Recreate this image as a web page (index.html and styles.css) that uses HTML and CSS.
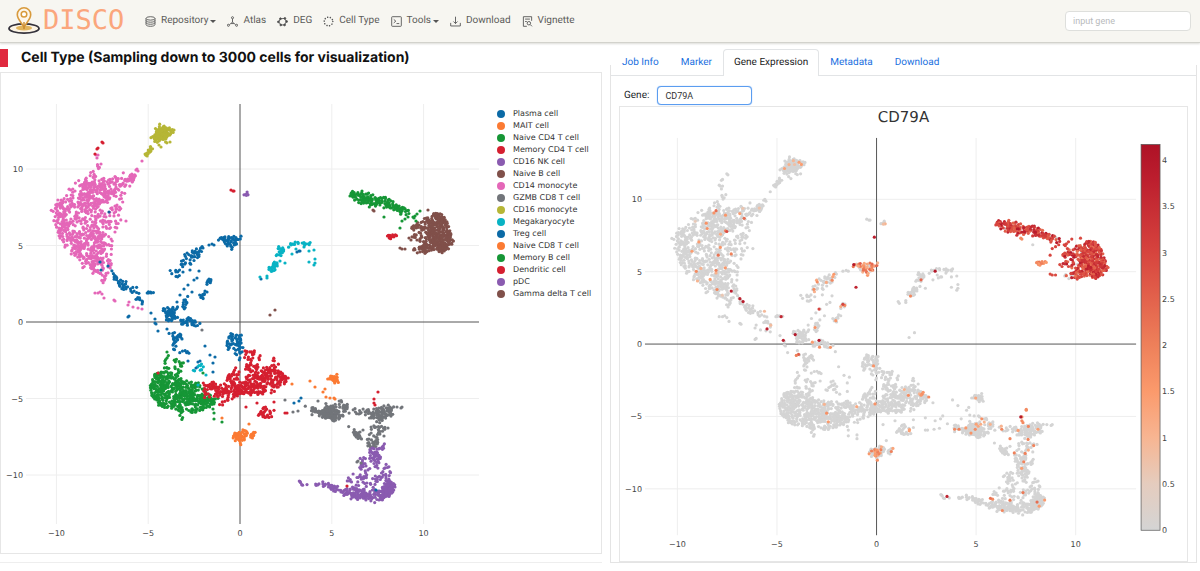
FILE: index.html
```html
<!DOCTYPE html>
<html lang="en">
<head>
<meta charset="utf-8">
<meta name="viewport" content="width=device-width, initial-scale=1">
<title>DISCO</title>
<link rel="stylesheet" href="styles.css">
</head>
<body>
<header class="topbar">
  <a class="brand" href="#">
    <svg class="brand-mark" viewBox="0 0 34 30" aria-hidden="true">
      <ellipse cx="17" cy="22.500" rx="15" ry="4.600" fill="#fbf3e4" stroke="#34323c" stroke-width="1.800"/>
      <ellipse cx="17" cy="22" rx="8" ry="2.600" fill="#e2b45c"/>
      <path d="M17 21.500C15 16.500 10.300 13.500 10.300 8.500a6.700 6.700 0 0 1 13.400 0C23.700 13.500 19 16.500 17 21.500Z" fill="#fdf6ea" stroke="#d89a3c" stroke-width="1.600"/>
      <circle cx="17" cy="8.300" r="2.800" fill="#fff" stroke="#d89a3c" stroke-width="1.500"/>
      <path d="M17 16v7" stroke="#c98a30" stroke-width="1.400"/>
    </svg>
    <span class="brand-name">DISCO</span>
  </a>
  <nav class="menu" aria-label="Main">
    <a href="#"><svg viewBox="0 0 16 16"><ellipse cx="8" cy="3.500" rx="6.500" ry="2.500"/><path d="M1.500 3.500v9c0 1.400 2.900 2.500 6.500 2.500s6.500-1.100 6.500-2.500v-9M1.500 6.500C1.500 8 4.400 9 8 9s6.500-1 6.500-2.500M1.500 9.500C1.500 11 4.400 12 8 12s6.500-1 6.500-2.500"/></svg>Repository<i class="caret"></i></a>
    <a href="#"><svg viewBox="0 0 16 16"><circle cx="8" cy="2.500" r="1.500"/><circle cx="2" cy="13.500" r="1.500"/><circle cx="14" cy="13.500" r="1.500"/><path d="M8 4v5M8 9l-4.500 3.500M8 9l4.500 3.500M6 11h4"/></svg>Atlas</a>
    <a href="#"><svg viewBox="0 0 16 16"><path d="M5 4l6-.5 2.500 4.500L11 13H5.500L2.500 8.500Z"/><g fill="#444"><circle cx="5" cy="4" r="1.300"/><circle cx="11.500" cy="3.500" r="1.300"/><circle cx="14" cy="8" r="1.300"/><circle cx="11" cy="13" r="1.300"/><circle cx="5.500" cy="13" r="1.300"/><circle cx="2" cy="8.500" r="1.300"/></g></svg>DEG</a>
    <a href="#"><svg viewBox="0 0 16 16"><circle cx="8" cy="8" r="6.300" stroke-width="2.200" stroke-linecap="round" stroke-dasharray=".1 3.857"/></svg>Cell Type</a>
    <a href="#"><svg viewBox="0 0 16 16"><rect x="1" y="1" width="14" height="14" rx="1"/><path d="M4 5l3 2.500L4 10M8 11h4"/></svg>Tools<i class="caret"></i></a>
    <a href="#"><svg viewBox="0 0 16 16"><path d="M1 10v4.500h14V10M8 1v10M5 8l3 3 3-3"/></svg>Download</a>
    <a href="#"><svg viewBox="0 0 16 16"><path d="M14 7V1H2v14h5M4.500 4.500h7M4.500 8H7"/><circle cx="10" cy="10.500" r="2.500"/><path d="M12 12.500l2.500 2.500"/></svg>Vignette</a>
  </nav>
  <input class="gene-search" type="text" placeholder="input gene" aria-label="input gene">
</header>

<main class="workspace">
  <section class="cells">
    <h1 class="heading">Cell Type (Sampling down to 3000 cells for visualization)</h1>
    <div class="card cell-card">
      <svg class="plot" id="cell-plot" viewBox="0 0 490 480" role="img" aria-label="Cell type embedding"></svg>
      <ul class="legend" id="legend"></ul>
    </div>
  </section>
  <section class="details">
    <nav class="tabs" aria-label="Results">
      <a href="#">Job Info</a>
      <a href="#">Marker</a>
      <a class="active" href="#" aria-current="page">Gene Expression</a>
      <a href="#">Metadata</a>
      <a href="#">Download</a>
    </nav>
    <div class="gene-row">
      <label for="gene">Gene:</label>
      <input id="gene" class="gene-input" type="text" value="CD79A">
    </div>
    <div class="card">
      <svg class="plot" id="gene-plot" viewBox="0 0 568 455" role="img" aria-label="CD79A expression"></svg>
    </div>
  </section>
</main>
<script src="plots.js"></script>
</body>
</html>
```
FILE: styles.css
```css
* { box-sizing: border-box; }
body {
  margin: 0;
  background: #fff;
  color: #212529;
  font-family: Roboto, "Liberation Sans", sans-serif;
  font-size: 10px;
  text-rendering: geometricPrecision;
}
a { text-decoration: none; }

.topbar {
  display: flex;
  align-items: center;
  height: 43px;
  padding: 0 9px 0 7px;
  background: #f7f6f1;
  border-bottom: 1px solid #d2d2cc;
  box-shadow: 0 1px 2px #dcdcd8;
}
.brand { display: flex; align-items: center; width: 138px; gap: 2px; }
.brand-mark { width: 34px; height: 30px; }
.brand-name {
  font-family: "DejaVu Sans Mono", monospace;
  font-size: 27px;
  line-height: 30px;
  color: #fba67c;
}
.menu { display: flex; align-items: center; gap: 11px; flex: 1; }
.menu a {
  display: flex;
  align-items: center;
  gap: 5px;
  line-height: 16px;
  color: #5c5c5a;
  white-space: nowrap;
}
.menu svg {
  width: 11px;
  height: 11px;
  fill: none;
  stroke: #555;
  stroke-width: 1.3;
}
.caret {
  margin-left: -3px;
  border: 3px solid transparent;
  border-top-color: #555;
  border-bottom: 0;
}
.gene-search {
  width: 126px;
  height: 20px;
  padding: 0 7px;
  border: 1px solid #dedfdc;
  border-radius: 4px;
  background: #fff;
  font: inherit;
}
.gene-search::placeholder { color: #b8babc; }

.workspace {
  display: grid;
  grid-template-columns: 602fr 587fr;
  gap: 8px;
  padding-right: 3px;
}
.cells { padding-top: 6px; border-bottom: 1px solid #eee; }
.heading {
  margin: 0 0 5px;
  padding-left: 13px;
  border-left: 8px solid #e0293f;
  font-family: Inter, "Liberation Sans", sans-serif;
  font-size: 14px;
  font-weight: 700;
  line-height: 18px;
  color: #111;
}
.card { border: 1px solid #e6e6e6; background: #fff; }
.cell-card { display: flex; }
.cell-card .plot { flex: 1; min-width: 0; }
.plot { display: block; width: 100%; height: auto; }
.plot text, .legend { font-family: "DejaVu Sans", Verdana, sans-serif; }
.plot text { font-size: 8px; fill: #444; }
.plot .title { font-size: 15px; fill: #333; }
.grid { stroke: #eee; }
.axis { stroke: #555; }

.legend {
  flex: 0 0 110px;
  margin: 0;
  padding: 35px 0 0 6px;
  list-style: none;
  font-size: 8px;
  line-height: 12px;
  color: #333;
  white-space: nowrap;
}
.legend li { display: flex; align-items: center; gap: 8px; }
.dot { width: 8px; height: 8px; border-radius: 50%; }

.details {
  margin-top: 22px;
  padding: 0 8px;
  border: 1px solid #e4e4e4;
  border-top: 0;
}
.tabs {
  display: flex;
  height: 27px;
  margin: -16px -8px 0;
  border-bottom: 1px solid #e2e4e6;
}
.tabs a {
  height: 27px;
  padding: 0 10px;
  border: 1px solid transparent;
  border-bottom: 0;
  line-height: 26px;
  color: #1a6fe0;
  white-space: nowrap;
}
.tabs .active {
  border-color: #e2e4e6;
  border-radius: 4px 4px 0 0;
  background: #fff;
  color: #222;
}
.gene-row {
  display: flex;
  align-items: center;
  gap: 8px;
  padding: 10px 0 1px 5px;
}
.gene-input {
  width: 95px;
  height: 19px;
  padding: 0 7px;
  border: 1px solid #5b9df0;
  border-radius: 4px;
  outline: 0;
  font: inherit;
  color: #333;
  box-shadow: 0 0 1px #5b9df0;
}
.gene-search, .gene-input { font-size: 9px; }
```
FILE: plots.js
```js
const COLORS = {
  blue: '#0b6aa6', orange: '#fb7a33', green: '#169636', red: '#d51f30',
  purple: '#8a5bb0', brown: '#80504a', pink: '#e467b8', gray: '#72757a',
  olive: '#b6b636', cyan: '#08b3c4', navy: '#1a5a9a'
};
const LEGEND = [
  ['Plasma cell', 'blue'], ['MAIT cell', 'orange'], ['Naive CD4 T cell', 'green'],
  ['Memory CD4 T cell', 'red'], ['CD16 NK cell', 'purple'], ['Naive B cell', 'brown'],
  ['CD14 monocyte', 'pink'], ['GZMB CD8 T cell', 'gray'], ['CD16 monocyte', 'olive'],
  ['Megakaryocyte', 'cyan'], ['Treg cell', 'blue'], ['Naive CD8 T cell', 'orange'],
  ['Memory B cell', 'green'], ['Dendritic cell', 'red'], ['pDC', 'purple'],
  ['Gamma delta T cell', 'brown']
];

// Outlines are in map units; the embedding origin is at (240, 322).
// Each entry: color, cell count, share expressing, level range, outline.
const REGIONS = [
  ['pink', 470, .03, [.5, 2], '85,176 94,170 99,160 101,168 106,177 113,173 121,171 129,172 134,180 126,196 121,208 123,222 113,233 111,260 113,280 105,281 93,275 80,263 64,248 55,229 51,213 58,197 67,190 75,183'],
  ['pink', 120, .03, [.5, 2], '82,188 95,180 105,179 118,178 123,183 118,192 106,198 98,205 81,205'],
  ['pink', 80, .02, [.5, 2], '60,202 80,202 82,225 90,238 80,245 64,240 54,226 52,212'],
  ['pink', 100, .02, [.5, 2], '70,240 84,228 104,225 108,245 100,256 108,278 95,272 82,260'],
  ['pink', 20, .03, [.5, 2], '128,180 131,174 136,175 134,181'],
  ['olive', 90, .06, [.5, 1.5], '153,142 152,137 158,129 165,127 171,130 171,135 164,139 158,143'],
  ['olive', 14, .1, [.5, 1.5], '144,157 147,156 154,147 151,147'],
  ['blue', 44, .8, [1, 2.6], '217,238 226,235 237,234 239,242 231,250 226,245'],
  ['blue', 36, .25, [1, 2], '175,265 180,258 190,250 203,245 204,252 194,262 185,268 178,267'],
  ['blue', 9, .1, [1, 2], '170,270 180,270 180,277 170,277'],
  ['blue', 8, .4, [1, 3], '207,276 212,276 212,283 207,283'],
  ['blue', 8, .4, [1, 2], '198,295 205,292 203,300 198,300'],
  ['blue', 12, .1, [1, 2], '183,300 188,296 187,309 182,310'],
  ['blue', 44, .03, [1, 2], '161,307 173,307 176,319 168,321'],
  ['blue', 28, .05, [1, 2], '177,321 186,315 193,320 203,322 202,327 182,325'],
  ['blue', 26, .04, [.5, 2], '112,272 118,278 125,281 128,291 122,290'],
  ['blue', 8, .1, [.5, 1], '130,286 140,286 139,294 130,294'],
  ['blue', 8, .1, [.5, 2], '137,297 147,298 142,312 137,306'],
  ['blue', 6, .1, [1, 2], '147,290 155,292 155,294 147,293'],
  ['blue', 24, 0, [1, 2], '168,332 182,333 182,340 176,350 170,350 174,341'],
  ['blue', 6, 0, [1, 2], '182,350 190,351 190,354 182,353'],
  ['blue', 46, .03, [1, 2], '230,333 242,332 241,345 246,348 232,352 226,346'],
  ['blue', 8, 0, [1, 2], '234,352 243,351 240,362 234,361'],
  ['cyan', 9, 0, [1, 2], '193,370 203,362 204,369 195,373'],
  ['green', 45, .02, [1, 2], '153,375 162,363 167,352 173,357 184,363 180,377 190,382'],
  ['green', 400, .01, [1, 2], '150,385 155,372 165,375 180,378 193,381 202,387 207,393 217,400 210,407 198,413 180,412 163,407 152,397'],
  ['red', 260, .01, [1, 2], '197,375 202,380 213,380 222,383 230,370 243,370 250,363 243,357 245,350 258,353 263,358 273,360 280,363 282,372 290,382 290,387 280,388 273,395 258,395 245,393 237,398 227,402 213,395 202,402 200,387'],
  ['red', 140, .02, [1, 2], '250,378 263,368 275,365 282,374 290,383 278,386 262,392 230,396 204,394 222,388'],
  ['red', 25, .08, [1, 2], '257,414 263,408 267,408 277,411 277,414 268,419'],
  ['orange', 38, .35, [1, 2], '232,435 244,429 248,433 245,441 233,441'],
  ['orange', 10, .05, [1, 2], '249,436 254,431 256,433 252,439'],
  ['orange', 22, .02, [1, 2], '327,379 334,375 338,380 335,384'],
  ['gray', 140, .07, [1, 2], '305,406 312,406 320,410 335,401 342,400 355,406 370,408 385,408 396,405 392,416 380,423 374,422 370,415 347,414 335,422 317,415'],
  ['gray', 60, .03, [1, 2], '315,412 336,406 338,418 330,419'],
  ['gray', 35, .04, [1, 2], '373,413 392,407 392,414 380,422'],
  ['gray', 18, 0, [1, 2], '347,424 350,424 362,438 362,441 355,437'],
  ['gray', 46, .04, [1, 2], '371,426 384,424 386,430 380,437 382,446 368,448 367,440'],
  ['purple', 34, .03, [1, 2], '368,448 383,448 380,462 370,460'],
  ['purple', 90, .02, [1, 2], '360,457 380,458 391,467 390,483 360,486 343,481 357,470'],
  ['purple', 45, .01, [1, 2], '300,481 302,484 323,483 345,489 358,498 342,494 320,486 301,486'],
  ['purple', 120, .01, [1, 2], '345,488 365,489 385,488 395,486 388,498 375,503 360,499 347,496'],
  ['purple', 60, .02, [1, 2], '382,487 390,480 396,486 390,497 383,495'],
  ['green', 135, .98, [2.4, 4], '352,193 362,191 369,192 375,196 386,197 397,204 408,208 411,215 405,215 395,210 378,205 363,205 352,200'],
  ['brown', 60, .88, [2.2, 4], '411,228 418,220 428,215 430,246 416,249 422,242 412,240'],
  ['brown', 240, .99, [2.2, 3.8], '427,222 434,213 442,213 447,222 451,233 454,240 451,250 440,253 430,250 428,240'],
  ['brown', 24, .6, [2.2, 3.8], '412,249 428,245 430,252 416,253'],
  ['red', 12, 1, [1.4, 2.4], '387,235 394,235 399,233 400,235 391,239 387,237'],
  ['cyan', 20, .05, [1, 2], '269,270 275,260 278,262 274,273'],
  ['cyan', 16, .08, [1, 2], '275,255 278,248 290,247 283,252 279,258'],
  ['cyan', 16, .06, [1, 2], '289,243 302,241 310,244 309,246 301,243 293,247'],
  ['purple', 6, .3, [.3, 1.3], '245,194 248,191 249,194 247,196']
];

// Isolated cells: color, expression level, coordinates.
const SINGLES = [
  ['pink', 0, '142,161 137,169 136,170 138,171 96,155 98,155 97,158 101,164 95,293 98,293 100,292 102,294 104,298 114,300 115,301 129,302 128,305 133,307 138,308 142,309 126,221 115,232 117,205 115,206'],
  ['red', 0, '102,142 103,143 97,149 98,148 95,154 231,190 233,191 234,191 246,407 257,403 274,402 285,413 287,413 158,373'],
  ['olive', 0, '174,130 161,147 159,145 170,142 157,131'],
  ['navy', 0, '109,212'],
  ['blue', 0, '203,248 209,245 212,244 214,245 190,270 183,272 199,271 197,278 194,280 188,285 184,289 192,292 180,295 205,291 207,292 177,302 100,262 108,266 101,270 128,317 129,316 151,313 155,319 156,324 155,323 158,331 167,329 188,361 205,346 210,355 215,357 213,363 213,372 198,362 196,368 200,361 261,279 297,252 299,251 300,251 294,403 299,401 301,398 376,490'],
  ['cyan', 0, '260,277 267,276 267,278 304,247 309,251 314,250 309,262 315,259 315,263 314,265 280,261 285,263 292,254 296,249 206,375 198,385'],
  ['green', 0, '213,409 214,413 214,419 222,422 203,373 384,217 167,352'],
  ['green', 3, '351,194 350,196 400,228 402,221 405,219 408,217 415,216 417,214 420,211 414,218 416,221 413,217'],
  ['orange', 0, '222,418 249,424 310,381 315,387 325,389 323,392 326,397 330,398 334,398 335,399 292,384'],
  ['brown', 2.9, '409,238 411,240 400,248 402,249 405,249 417,240 414,226 412,227 428,210'],
  ['brown', 0, '275,310 270,315'],
  ['brown', 1.8, '373,210 374,211'],
  ['red', 1.8, '378,392 374,403 375,405 374,399 347,486'],
  ['gray', 0, '285,400 293,412 298,411 318,401 202,330 397,407 401,408 402,407 358,461 361,463 357,462 384,436 388,428 360,432 363,430']
];

// Strongly expressing cells, in map units.
const HOT = [
  ['238,209', 3.8], ['106,266', 3.8], ['114,274', 3.7], ['117,277', 3.9], ['139,306', 3.8],
  ['152,293', 3.6], ['154,318', 3.8], ['165,312', 4], ['187,318', 4], ['221,262', 3.7],
  ['219,238', 4], ['209,280', 3], ['187,285', 3], ['102,203', 2.9], ['92,181', 2.3],
  ['118,189', 2.3], ['94,228', 2.2], ['92,244', 2], ['294,245', 4], ['281,254', 2.4],
  ['373,399', 4], ['378,391', 1.8], ['305,483', 3.7], ['168,333', 2.6], ['166,334', 2],
  ['282,375', 1.8], ['281,376', 1.6], ['283,373', 1.6], ['345,485', 2.2], ['363,487', 2.1],
  ['375,479', 2.1], ['388,489', 2.3], ['316,412', 2], ['312,412', 1.8], ['337,401', 1.7],
  ['367,437', 2], ['363,422', 1.9], ['380,409', 1.9], ['194,395', 1.7], ['241,436', 2],
  ['242,438', 1.9], ['240,434', 1.6]
];

const SCALE = [
  [0, [212, 212, 212]], [.5, [229, 204, 190]], [1, [247, 181, 146]], [1.5, [251, 154, 108]],
  [2, [238, 128, 90]], [3, [215, 68, 62]], [3.8, [188, 30, 46]], [4.17, [174, 18, 38]]
];
function levelColor(v) {
  let i = 1;
  while (i < SCALE.length - 1 && SCALE[i][0] < v) i++;
  const [a, ca] = SCALE[i - 1], [b, cb] = SCALE[i];
  const t = Math.min(1, (v - a) / (b - a));
  return `rgb(${ca.map((c, k) => Math.round(c + (cb[k] - c) * t)).join(',')})`;
}

let seed = 20467;
function rand() {
  seed = (seed + 0x6D2B79F5) | 0;
  let t = Math.imul(seed ^ (seed >>> 15), 1 | seed);
  t = (t + Math.imul(t ^ (t >>> 7), 61 | t)) ^ t;
  return ((t ^ (t >>> 14)) >>> 0) / 4294967296;
}
const parse = s => s.split(' ').map(p => p.split(',').map(Number));
function inside(x, y, poly) {
  let hit = false;
  for (let i = 0, j = poly.length - 1; i < poly.length; j = i++) {
    const [xi, yi] = poly[i], [xj, yj] = poly[j];
    if ((yi > y) !== (yj > y) && x < (xj - xi) * (y - yi) / (yj - yi) + xi) hit = !hit;
  }
  return hit;
}

const cells = [];
const addCell = (x, y, color, level) =>
  cells.push({ x: (x - 240) / 18.36, y: (322 - y) / 15.3, color, level });

for (const [color, count, share, [lo, hi], outline] of REGIONS) {
  const poly = parse(outline);
  const xs = poly.map(p => p[0]), ys = poly.map(p => p[1]);
  const x0 = Math.min(...xs), x1 = Math.max(...xs), y0 = Math.min(...ys), y1 = Math.max(...ys);
  const placed = [];
  for (let tries = 0; placed.length < count && tries < 20000; tries++) {
    let x, y;
    if (placed.length && rand() < .25) {
      const p = placed[placed.length - 1], a = rand() * 6.283, d = 1.5 + rand() * 2;
      x = p[0] + Math.cos(a) * d;
      y = p[1] + Math.sin(a) * d;
      // Strays may fall just past the outline.
      if (!inside(x, y, poly) && rand() < .6) continue;
    } else {
      x = x0 + rand() * (x1 - x0);
      y = y0 + rand() * (y1 - y0);
      if (!inside(x, y, poly)) continue;
    }
    if (placed.some(p => Math.hypot(p[0] - x, p[1] - y) < 1)) continue;
    placed.push([x, y]);
    addCell(x, y, color, rand() < share ? lo + rand() * (hi - lo) : 0);
  }
}
for (const [color, level, list] of SINGLES)
  for (const [x, y] of parse(list)) addCell(x, y, color, level);

function drawAxes(f) {
  let s = '';
  for (const t of [-10, -5, 5, 10]) {
    const x = f.ox + t * f.sx, y = f.oy - t * f.sy;
    s += `<path class="grid" d="M${x} ${f.top}V${f.bottom}M${f.left} ${y}H${f.right}"/>`;
  }
  s += `<path class="axis" d="M${f.ox} ${f.top}V${f.bottom}M${f.left} ${f.oy}H${f.right}"/>`;
  for (const t of [-10, -5, 0, 5, 10]) {
    const label = String(t).replace('-', '\u2212');
    s += `<text x="${f.ox + t * f.sx}" y="${f.bottom + 12}" text-anchor="middle">${label}</text>`;
    s += `<text x="${f.left - 3}" y="${f.oy - t * f.sy + 3}" text-anchor="end">${label}</text>`;
  }
  return s;
}
const drawCell = (f, x, y, fill) =>
  `<circle cx="${(f.ox + x * f.sx).toFixed(1)}" cy="${(f.oy - y * f.sy).toFixed(1)}" r="1.6" fill="${fill}"/>`;

const left = { ox: 239, oy: 249, sx: 18.36, sy: 15.3, left: 25, right: 478, top: 31, bottom: 451 };
document.getElementById('cell-plot').innerHTML =
  drawAxes(left) + cells.map(c => drawCell(left, c.x, c.y, COLORS[c.color])).join('');

const right = { ox: 257, oy: 237.5, sx: 19.95, sy: 14.5, left: 25, right: 517, top: 31, bottom: 429 };
const ranked = cells.slice().sort((a, b) => (a.level > 0) - (b.level > 0));
let gene = drawAxes(right) + ranked.map(c => drawCell(right, c.x, c.y, levelColor(c.level))).join('');
for (const [at, level] of HOT) {
  const [x, y] = parse(at)[0];
  gene += drawCell(right, (x - 240) / 18.36, (322 - y) / 15.3, levelColor(level));
}
gene += '<text class="title" x="284" y="15" text-anchor="middle">CD79A</text>';
gene += '<defs><linearGradient id="ramp" x1="0" x2="0" y1="1" y2="0">' +
  SCALE.map(([v]) => `<stop offset="${v / 4.17}" stop-color="${levelColor(v)}"/>`).join('') +
  '</linearGradient></defs><rect x="522" y="37.500" width="19" height="386.500" fill="url(#ramp)" stroke="#555" stroke-width=".7"/>';
for (let v = 0; v <= 4; v += .5)
  gene += `<text x="543" y="${427 - v * 92.7}">${v}</text>`;
document.getElementById('gene-plot').innerHTML = gene;

document.getElementById('legend').innerHTML = LEGEND.map(([name, color]) =>
  `<li><span class="dot" style="background:${COLORS[color]}"></span>${name}</li>`).join('');
```
